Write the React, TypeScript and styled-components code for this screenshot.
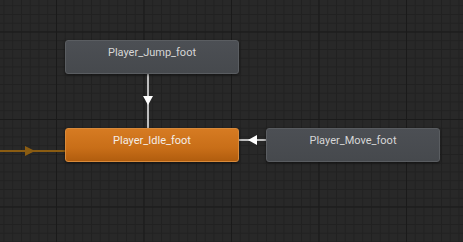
import styled, { createGlobalStyle } from "styled-components";

const GlobalStyle = createGlobalStyle`
  html, body {
    margin: 0;
    padding: 0;
    background: #282828;
  }
`;

type NodeData = {
  id: string;
  label: string;
  x: number;
  y: number;
  active?: boolean;
};

const nodes: NodeData[] = [
  { id: "jump", label: "Player_Jump_foot", x: 65, y: 40 },
  { id: "idle", label: "Player_Idle_foot", x: 65, y: 128, active: true },
  { id: "move", label: "Player_Move_foot", x: 266, y: 128 },
];

const Canvas = styled.div`
  position: relative;
  width: 463px;
  height: 242px;
  overflow: hidden;
  background-color: #282828;
  background-image:
    linear-gradient(to right, #1a1a1a 1px, transparent 1px),
    linear-gradient(to bottom, #1a1a1a 1px, transparent 1px),
    linear-gradient(to right, #212121 1px, transparent 1px),
    linear-gradient(to bottom, #212121 1px, transparent 1px);
  background-size: 87.5px 87.5px, 87.5px 87.5px, 8.75px 8.75px, 8.75px 8.75px;
  background-position: 56px 31.5px, 56px 31.5px, 3.5px 5.25px, 3.5px 5.25px;
`;

const Edges = styled.svg`
  position: absolute;
  left: 0;
  top: 0;
  width: 463px;
  height: 242px;
`;

const StateNode = styled.div<{ $active?: boolean }>`
  position: absolute;
  width: 174px;
  height: 34px;
  box-sizing: border-box;
  display: flex;
  align-items: flex-start;
  justify-content: center;
  padding-top: 5px;
  line-height: 14px;
  border-radius: 3px;
  border: 1px solid ${({ $active }) => ($active ? "#d98a3a" : "#5a5d61")};
  background: ${({ $active }) =>
    $active
      ? "linear-gradient(to bottom, #d67b22 0%, #c86e18 60%, #b15d0e 100%)"
      : "linear-gradient(to bottom, #4c4f54 0%, #46494d 100%)"};
  box-shadow: 0 1px 3px rgba(0, 0, 0, 0.55);
  font-family: Roboto, "Liberation Sans", sans-serif;
  font-size: 11px;
  color: ${({ $active }) => ($active ? "#f4eee8" : "#d6d6d6")};
  white-space: nowrap;
`;

export default function App() {
  return (
    <>
      <GlobalStyle />
      <Canvas>
        <Edges viewBox="0 0 463 242">
          {/* entry transition */}
          <line x1="0" y1="151" x2="65" y2="151" stroke="#8a5c12" strokeWidth="2" />
          <polygon points="25,146 35,151 25,156" fill="#8a5c12" />
          {/* jump -> idle */}
          <line x1="148" y1="74" x2="148" y2="128" stroke="#bdbdbd" strokeWidth="2" />
          <polygon points="143,96 153,96 148,105" fill="#ffffff" />
          {/* move -> idle */}
          <line x1="239" y1="140" x2="266" y2="140" stroke="#bdbdbd" strokeWidth="2" />
          <polygon points="257,135 257,145 248,140" fill="#ffffff" />
        </Edges>
        {nodes.map((n) => (
          <StateNode key={n.id} $active={n.active} style={{ left: n.x, top: n.y }}>
            {n.label}
          </StateNode>
        ))}
      </Canvas>
    </>
  );
}
